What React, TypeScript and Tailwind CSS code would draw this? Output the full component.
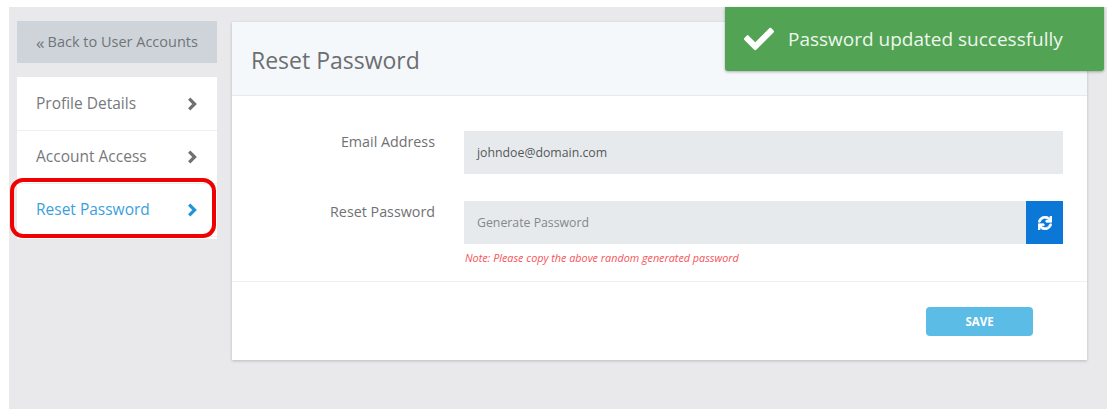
import { FaCheck, FaSync } from "react-icons/fa";

const menu = [
  { label: "Profile Details", active: false },
  { label: "Account Access", active: false },
  { label: "Reset Password", active: true },
];

function Chevron({ className }: { className: string }) {
  return (
    <svg viewBox="0 0 11 14" className={`h-[14px] w-[11px] ${className}`} fill="none" stroke="currentColor" strokeWidth="3.2">
      <path d="M2.2 1.6 7.6 7 2.2 12.4" />
    </svg>
  );
}

export default function App() {
  return (
    <div className="relative h-[420px] w-[1113px] overflow-hidden bg-white font-['Open_Sans',sans-serif]">
      <div className="ml-[9px] mr-[6px] mt-[7px] flex h-[402px] gap-[15px] bg-[#e9e9eb] pl-[8px] pt-[14px]">
        <div className="w-[200px] shrink-0">
          <div className="flex h-[42px] items-center justify-center bg-[#cfd4da] text-[14.5px] text-[#6f7479]">
            <span className="mr-[3px] text-[17px] leading-none">«</span>Back to User Accounts
          </div>
          <div className="mt-[14px] bg-white pb-[2px] pt-px">
            {menu.map((item) => (
              <div
                key={item.label}
                className={`flex h-[53px] items-center justify-between border-b border-[#eeeff1] pl-[19px] pr-[19px] text-[15.5px] ${
                  item.active ? "text-[#3b9fdc]" : "text-[#77797c]"
                }`}
              >
                <span>{item.label}</span>
                <Chevron className={item.active ? "text-[#1f94d8]" : "text-[#6f7072]"} />
              </div>
            ))}
          </div>
        </div>

        <div className="mt-px h-[338px] w-[855px] shrink-0 bg-white shadow-[0_1px_3px_rgba(0,0,0,0.2)]">
          <div className="flex h-[74px] items-center border-b border-[#e6eaee] bg-[#f5f8fb] pl-[19px] pt-[3px] text-[23px] text-[#6c6e70]">
            Reset Password
          </div>
          <div className="h-[186px] border-b border-[#eeeff1] pl-[232px] pr-[24px] pt-[35px]">
            <div className="flex">
              <div className="-ml-[203px] w-[203px] pr-[29px] text-right text-[14.3px] text-[#6f7174]">
                Email Address
              </div>
              <div className="flex h-[43px] flex-1 items-center bg-[#e7eaec] pl-[13px] pt-px text-[12.3px] text-[#55585b]">
                johndoe@domain.com
              </div>
            </div>
            <div className="mt-[27px] flex">
              <div className="-ml-[203px] w-[203px] pr-[29px] text-right text-[14.3px] text-[#6f7174]">
                Reset Password
              </div>
              <div className="flex-1">
                <div className="flex h-[43px]">
                  <div className="flex flex-1 items-center bg-[#e7eaec] pl-[13px] pt-[2px] text-[12.3px] text-[#85888b]">
                    Generate Password
                  </div>
                  <div className="flex w-[37px] items-center justify-center bg-[#0b78d8] text-[14px] text-white">
                    <FaSync className="stroke-white stroke-[30]" />
                  </div>
                </div>
                <div className="ml-px mt-[6px] text-[10.8px] italic text-[#f4545a]">
                  Note: Please copy the above random generated password
                </div>
              </div>
            </div>
          </div>
          <div className="flex justify-end pr-[54px] pt-[25px]">
            <div className="flex h-[29px] w-[107px] items-center justify-center rounded-[4px] bg-[#5bbce6] text-[11.5px] font-bold text-white">
              SAVE
            </div>
          </div>
        </div>
      </div>

      <div className="absolute left-[725px] top-[7px] flex h-[64px] w-[379px] items-center gap-[14px] rounded-b-[3px] bg-[#52a354] pl-[19px] text-[19px] text-[#eef6ee] shadow-[0_1px_3px_rgba(0,0,0,0.3)]">
        <FaCheck className="text-[30px] text-white" />
        <span>Password updated successfully</span>
      </div>

      <div className="absolute left-[10px] top-[178px] h-[60px] w-[206px] rounded-[13px] border-4 border-[#f00000]" />
    </div>
  );
}
